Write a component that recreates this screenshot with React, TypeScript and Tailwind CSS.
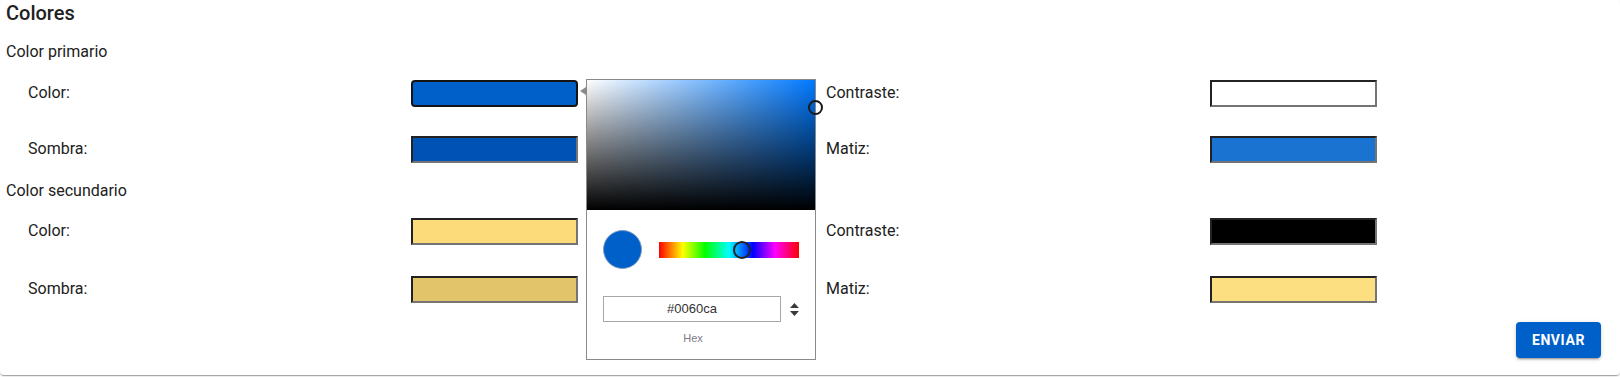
import React from "react";

const insetBorder =
  "border-2 border-t-[#222] border-l-[#222] border-b-[#747474] border-r-[#747474]";

function Swatch({ color, focused }: { color: string; focused?: boolean }) {
  if (focused) {
    return (
      <div
        className="w-[167px] h-[27px] rounded-[4px] border-2 border-[#141414]"
        style={{ backgroundColor: color }}
      />
    );
  }
  return (
    <div className={`w-[167px] h-[27px] ${insetBorder}`} style={{ backgroundColor: color }} />
  );
}

function Row({
  leftLabel,
  leftColor,
  rightLabel,
  rightColor,
  focused,
  className,
}: {
  leftLabel: string;
  leftColor: string;
  rightLabel: string;
  rightColor: string;
  focused?: boolean;
  className?: string;
}) {
  return (
    <div className={`grid grid-cols-[798px_798px] h-[27px] ${className ?? ""}`}>
      <div className="flex items-center pl-[22px]">
        <span className="w-[383px] text-[16px] leading-[24px] -mt-[1px]">{leftLabel}</span>
        <Swatch color={leftColor} focused={focused} />
      </div>
      <div className="flex items-center pl-[22px]">
        <span className="w-[384px] text-[16px] leading-[24px] -mt-[1px]">{rightLabel}</span>
        <Swatch color={rightColor} />
      </div>
    </div>
  );
}

function Picker() {
  return (
    <div className="absolute left-[586px] top-[79px] w-[230px] h-[281px] border border-[#8a8a8a] bg-white">
      {/* arrow */}
      <div className="absolute left-[-7px] top-[7px] w-0 h-0 border-y-[4px] border-y-transparent border-r-[6px] border-r-[#8a8a8a]" />
      {/* saturation */}
      <div className="relative w-[228px] h-[130px] bg-[#0079ff]">
        <div className="absolute inset-0 bg-gradient-to-r from-white to-transparent" />
        <div className="absolute inset-0 bg-gradient-to-t from-black to-transparent" />
        <div className="absolute left-[221px] top-[20px] w-[15px] h-[15px] rounded-full border-2 border-[#1a1a1a]" />
      </div>
      {/* body */}
      <div className="px-[16px] pt-[20px]">
        <div className="flex items-center gap-[17px]">
          <div className="w-[39px] h-[39px] rounded-full bg-[#0060ca] border border-[#7f9cc4]" />
          <div
            className="relative w-[140px] h-[16px]"
            style={{
              background:
                "linear-gradient(to right, #ff0000 0%, #ffff00 17%, #00ff00 33%, #00ffff 50%, #0000ff 67%, #ff00ff 83%, #ff0000 100%)",
            }}
          >
            <div className="absolute left-[74px] top-[-1px] w-[18px] h-[18px] rounded-full border-2 border-[#222]" />
          </div>
        </div>
        <div className="flex items-center mt-[27px] gap-[9px]">
          <div className="w-[180px] h-[26px] border border-[#a8a8a8] flex items-center justify-center text-[13px] text-[#333] font-['Liberation_Sans',sans-serif]">
            #0060ca
          </div>
          <svg width="9" height="13" viewBox="0 0 9 13">
            <polygon points="4.5,0 9,5 0,5" fill="#3a3a3a" />
            <polygon points="0,8 9,8 4.5,13" fill="#3a3a3a" />
          </svg>
        </div>
        <div className="w-[180px] text-center text-[11px] leading-[14px] mt-[9px] text-[#7a7a8a] font-['Liberation_Sans',sans-serif]">
          Hex
        </div>
      </div>
    </div>
  );
}

export default function App() {
  return (
    <div className="w-[1620px] h-[377px] bg-white font-['Roboto',sans-serif] text-[#212121]">
      <div className="relative h-[375px] rounded-[4px] bg-white shadow-[0px_2px_1px_-1px_rgba(0,0,0,0.2),0px_1px_1px_0px_rgba(0,0,0,0.14),0px_1px_3px_0px_rgba(0,0,0,0.12)]">
        <div className="pl-[6px] pt-[0px]">
          <h2 className="h-[27px] flex items-center text-[20px] font-medium leading-[27px]">Colores</h2>
          <p className="mt-[13px] h-[24px] text-[16px] leading-[24px]">Color primario</p>
          <Row
            className="mt-[16px]"
            leftLabel="Color:"
            leftColor="#0060ca"
            rightLabel="Contraste:"
            rightColor="#ffffff"
            focused
          />
          <Row
            className="mt-[29px]"
            leftLabel="Sombra:"
            leftColor="#0052b4"
            rightLabel="Matiz:"
            rightColor="#1a73d0"
          />
          <p className="mt-[16px] h-[24px] text-[16px] leading-[24px]">Color secundario</p>
          <Row
            className="mt-[15px]"
            leftLabel="Color:"
            leftColor="#fcdc7a"
            rightLabel="Contraste:"
            rightColor="#000000"
          />
          <Row
            className="mt-[31px]"
            leftLabel="Sombra:"
            leftColor="#e2c46a"
            rightLabel="Matiz:"
            rightColor="#fcdf80"
          />
          <div className="flex justify-end pr-[19px] mt-[19px]">
            <button className="h-[36px] px-[16px] rounded-[4px] bg-[#0060ca] text-white text-[14px] font-bold tracking-[0.6px] uppercase shadow-[0px_3px_1px_-2px_rgba(0,0,0,0.2),0px_2px_2px_0px_rgba(0,0,0,0.14),0px_1px_5px_0px_rgba(0,0,0,0.12)]">
              ENVIAR
            </button>
          </div>
        </div>
        <Picker />
      </div>
    </div>
  );
}
